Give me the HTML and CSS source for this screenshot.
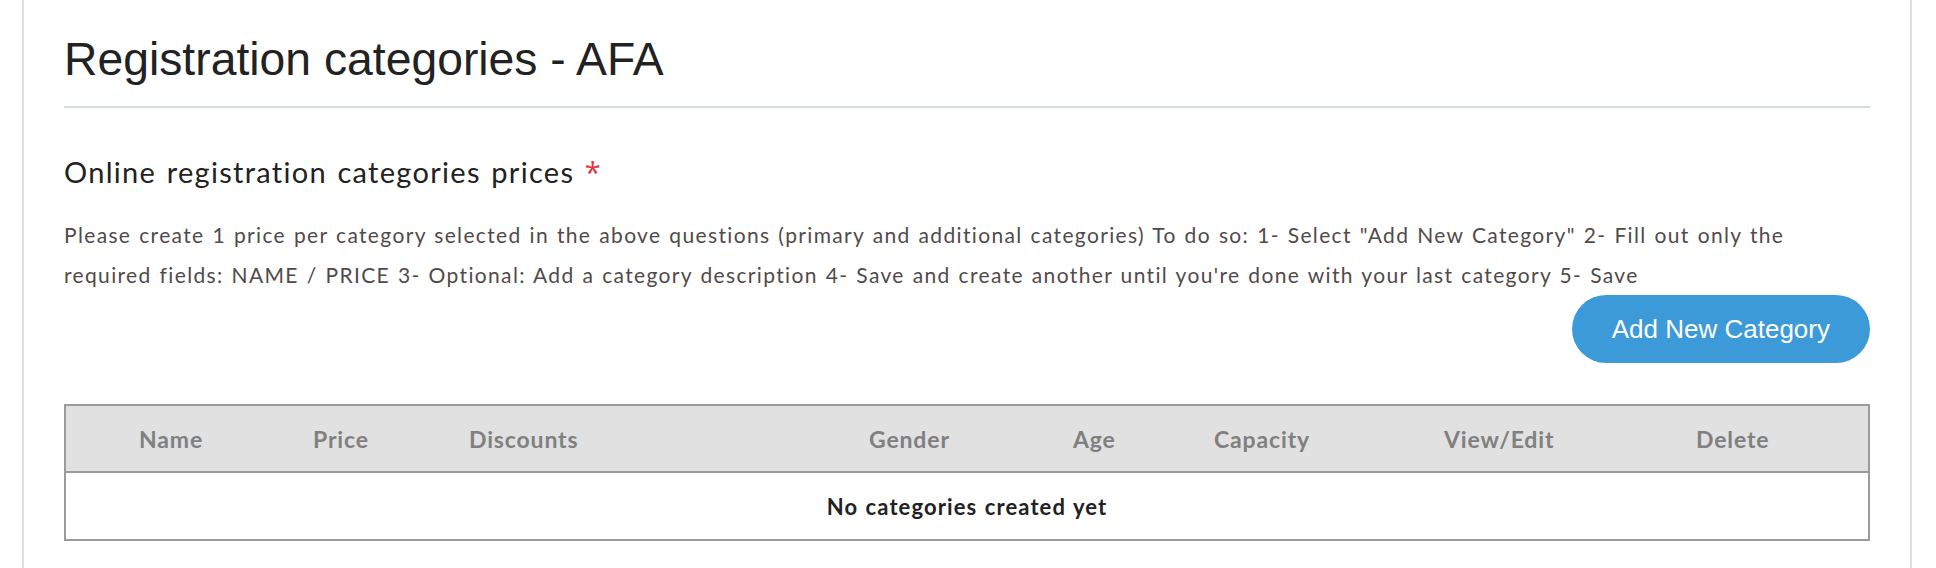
FILE: index.html
```html
<!DOCTYPE html>
<html lang="en">
<head>
  <meta charset="UTF-8">
  <meta name="viewport" content="width=device-width, initial-scale=1.0">
  <title>Registration categories - AFA</title>
  <link rel="stylesheet" href="styles.css">
</head>
<body>
  <div class="panel">
    <h1 class="page-title">Registration categories - AFA</h1>
    <hr class="divider">

    <section class="prices">
      <h2 class="section-title">Online registration categories prices <span class="required">*</span></h2>
      <p class="help">Please create 1 price per category selected in the above questions (primary and additional categories) To do so: 1- Select "Add New Category" 2- Fill out only the required fields: NAME / PRICE 3- Optional: Add a category description 4- Save and create another until you're done with your last category 5- Save</p>

      <div class="actions">
        <button class="btn-add">Add New Category</button>
      </div>

      <table class="categories">
        <colgroup>
          <col style="width: 174px">
          <col style="width: 156px">
          <col style="width: 400px">
          <col style="width: 204px">
          <col style="width: 141px">
          <col style="width: 230px">
          <col style="width: 252px">
          <col>
        </colgroup>
        <thead>
          <tr>
            <th>Name</th>
            <th>Price</th>
            <th>Discounts</th>
            <th>Gender</th>
            <th>Age</th>
            <th>Capacity</th>
            <th>View/Edit</th>
            <th>Delete</th>
          </tr>
        </thead>
        <tbody>
          <tr>
            <td colspan="8" class="empty">No categories created yet</td>
          </tr>
        </tbody>
      </table>
    </section>
  </div>
</body>
</html>
```

FILE: styles.css
```css
* {
  box-sizing: border-box;
  margin: 0;
  padding: 0;
}

body {
  background-color: #fff;
  font-family: "Lato", "Open Sans", sans-serif;
  color: #222;
}

.panel {
  margin: 0 24px 0 22px;
  min-height: 100vh;
  border-left: 2px solid #dce1e5;
  border-right: 2px solid #dce1e5;
  padding: 32px 40px 40px;
}

.page-title {
  font-family: "Liberation Sans", Arial, sans-serif;
  font-size: 46.3px;
  font-weight: normal;
  line-height: 54px;
  color: #222;
}

.divider {
  border: none;
  border-top: 2px solid #d6dde1;
  margin-top: 20px;
}

.section-title {
  margin-top: 46px;
  font-size: 29px;
  font-weight: normal;
  line-height: 36px;
  letter-spacing: 1.3px;
  word-spacing: 1.7px;
  color: #222;
}

.required {
  font-family: "Open Sans", sans-serif;
  color: #e2343f;
}

.help {
  margin-top: 25px;
  font-size: 21px;
  line-height: 40px;
  letter-spacing: 1.35px;
  word-spacing: 1.2px;
  color: #514a4a;
}

.actions {
  display: flex;
  justify-content: flex-end;
}

.btn-add {
  height: 68px;
  padding: 0 40px;
  border: none;
  border-radius: 34px;
  background-color: #3d9ad9;
  color: #fff;
  font-family: "Liberation Sans", Arial, sans-serif;
  font-size: 26px;
  line-height: 64px;
  cursor: pointer;
}

.categories {
  width: 100%;
  margin-top: 41px;
  table-layout: fixed;
  border: 2px solid #9b9b9b;
  border-spacing: 0;
}

.categories th {
  height: 67px;
  padding-left: 73px;
  background-color: #e1e1e1;
  border-bottom: 2px solid #9b9b9b;
  color: #808080;
  font-size: 23px;
  font-weight: bold;
  letter-spacing: 0.85px;
  text-align: left;
  white-space: nowrap;
}

.categories td {
  height: 66px;
}

.empty {
  text-align: center;
  font-size: 22px;
  font-weight: bold;
  letter-spacing: 1.1px;
  word-spacing: 1px;
  color: #222;
}
```
